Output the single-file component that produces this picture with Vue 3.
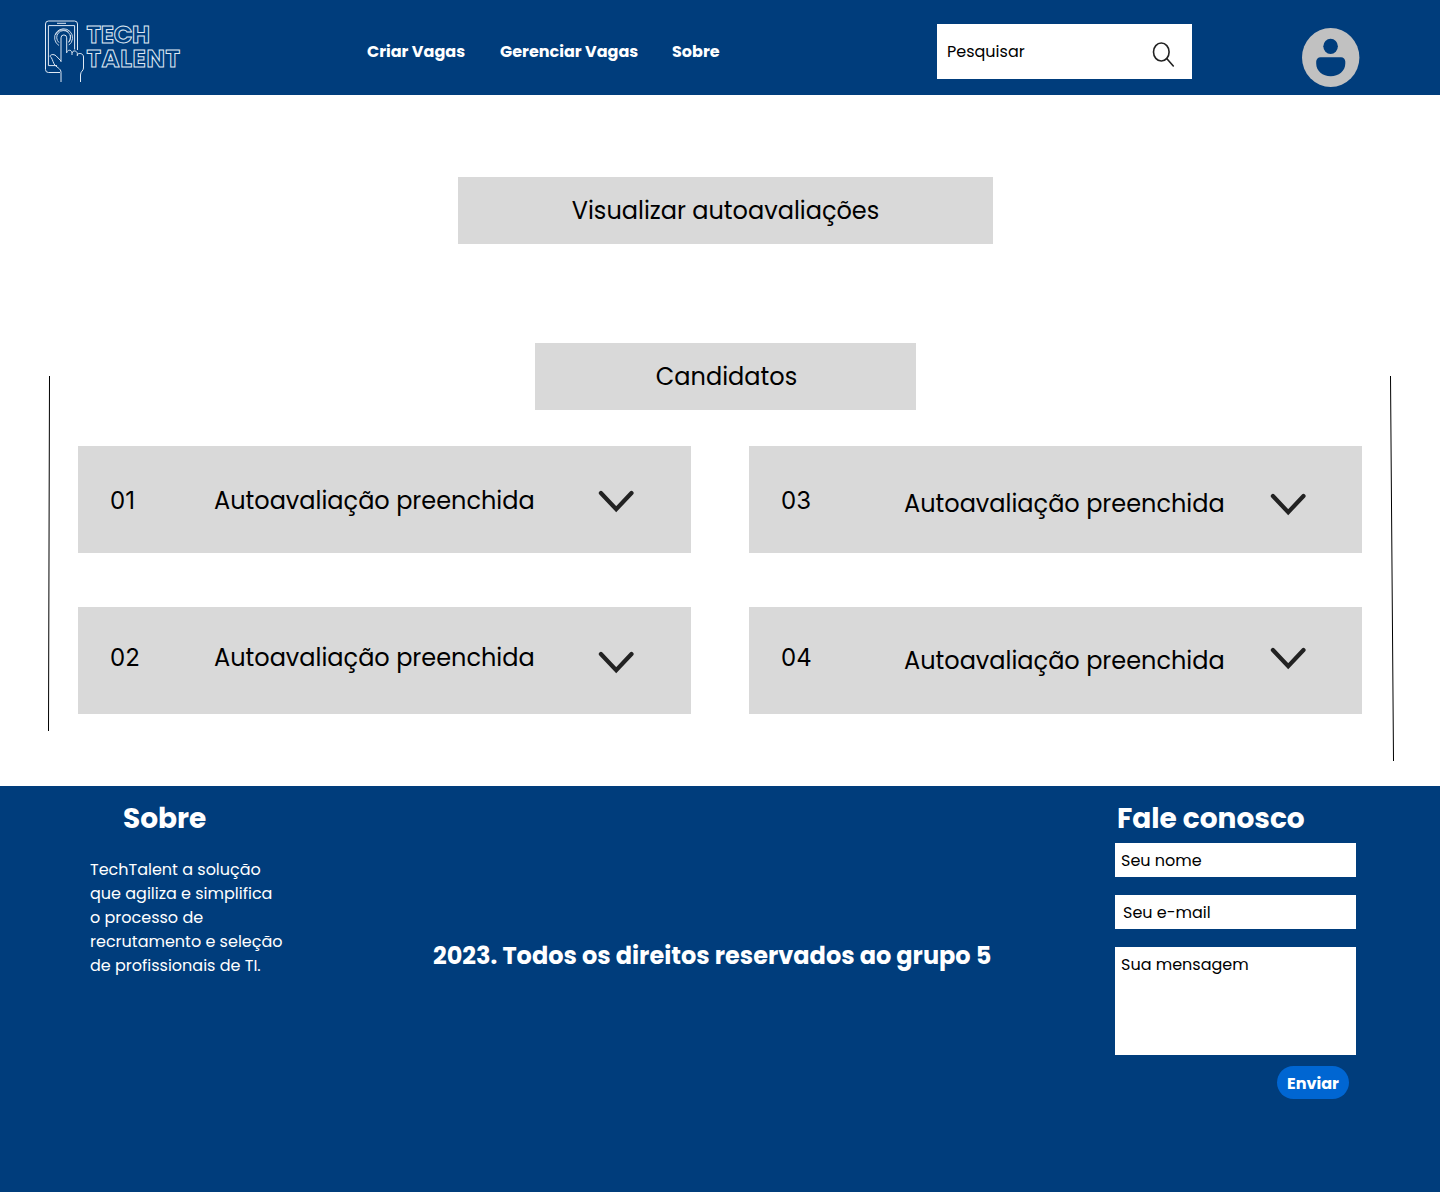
<script setup>
const links = ['Criar Vagas', 'Gerenciar Vagas', 'Sobre']
const candidates = [
  { id: '01', cls: 'c1' },
  { id: '03', cls: 'c3' },
  { id: '02', cls: 'c2' },
  { id: '04', cls: 'c4' },
]
const about = [
  'TechTalent a solução',
  'que agiliza e simplifica',
  'o processo de',
  'recrutamento e seleção',
  'de profissionais de TI.',
]
</script>

<template>
  <div class="page">
    <header class="topbar">
      <svg class="logo" width="138" height="64" viewBox="44 19 138 64" fill="none" stroke="#dfe9f4" stroke-width="1">
        <path d="M60 72.500H48.500a3 3 0 0 1-3-3V24a3 3 0 0 1 3-3h26a3 3 0 0 1 3 3v26" />
        <path d="M57 65.600h-8.600V25.600h26.200V49.500M57 23.300h9" />
        <path d="M59 45.500a9 9 0 1 1 9.800-.4M59 42.600a6.900 6.900 0 1 1 9.800-.6M55.500 35c2-5 8-7 13-3M70.500 35c0 5-1 6-2 7.500" stroke-width=".9" />
        <path d="M61 62V37.800a2.800 2.800 0 0 1 5.700 0V53M66.700 52.500c.8-3 4.600-3 5.300 0V55M72 53c.8-3 4.600-2.600 5.300.3V56M77.300 54.500c2-2 6.200-1 6.200 2.500V68c0 3-3 3-3 7v7M61 61l-5-5.200c-2.500-2.200-6-1-6 .4 2.200 1.600 2.600 5 4 7.600 2 3.600 7 4.500 7 8.500V82" />
        <text x="86.500" y="43.200" textLength="63.500">TECH</text>
        <text x="86.500" y="66.600" textLength="93.500">TALENT</text>
      </svg>
      <nav class="nav"><a v-for="l in links" :key="l">{{ l }}</a></nav>
      <div class="search">
        <span>Pesquisar</span>
        <svg width="24" height="27" viewBox="0 0 24 27" fill="none" stroke="#222" stroke-width="1.600" stroke-linecap="round">
          <ellipse cx="9.300" cy="11" rx="7.800" ry="9" /><path d="M14.700 17.500L21.300 25" />
        </svg>
      </div>
      <svg class="avatar" width="58" height="60" viewBox="0 0 58 60">
        <ellipse cx="28.700" cy="29.500" rx="28.700" ry="29.500" fill="#c1c1c1" />
        <ellipse cx="28.600" cy="18.300" rx="7.300" ry="7.600" fill="#003d7c" />
        <path d="M18.500 29.200h20.500a4.300 4.300 0 0 1 4.300 4.300v2C43.300 43 36.700 48.200 28.700 48.200S14.200 43 14.200 35.500v-2a4.300 4.300 0 0 1 4.300-4.300z" fill="#003d7c" />
      </svg>
    </header>

    <main>
      <h1 class="banner">Visualizar autoavaliações</h1>
      <section class="candidates">
        <svg class="rail" width="3" height="355"><path d="M1.500 0L.5 355" stroke="#000" /></svg>
        <div class="content">
          <h2 class="banner small">Candidatos</h2>
          <div class="cards">
            <article v-for="c in candidates" :key="c.id" class="card" :class="c.cls">
              <span class="num">{{ c.id }}</span>
              <span class="label">Autoavaliação preenchida</span>
              <svg class="chev" width="36" height="23" viewBox="0 0 36 23" fill="none" stroke="#222" stroke-width="4.200" stroke-linecap="round">
                <path d="M2.900 3L18.200 19.200L33.500 3" />
              </svg>
            </article>
          </div>
        </div>
        <svg class="rail" width="5" height="385"><path d="M.5 0L3.500 385" stroke="#000" /></svg>
      </section>
    </main>

    <footer class="footer">
      <section class="about">
        <h3>Sobre</h3>
        <p><span v-for="l in about" :key="l" class="line">{{ l }}</span></p>
      </section>
      <p class="copy">2023. Todos os direitos reservados ao grupo 5</p>
      <form class="contact">
        <h3>Fale conosco</h3>
        <div class="field">Seu nome</div>
        <div class="field email">Seu e-mail</div>
        <div class="field message">Sua mensagem</div>
        <button type="button">Enviar</button>
      </form>
    </footer>
  </div>
</template>

<style>
body { margin: 0; background: #fff; }
</style>

<style scoped>
.page { width: 1440px; height: 1192px; overflow: hidden; font: 16px/24px Poppins, Inter, "Open Sans", sans-serif; color: #000; white-space: nowrap; }
h1, h2, h3, p { margin: 0; }
.topbar { height: 95px; background: #003d7c; display: flex; align-items: flex-start; }
.logo { margin: 19px 0 0 44px; flex: none; overflow: visible; }
.logo text { font: 700 24.500px Poppins, Inter, sans-serif; stroke-width: 1; }
.nav { display: flex; width: 569px; margin: 40px 0 0 185px; color: #fff; font-weight: 700; }
.nav a:nth-child(1) { width: 133px; }
.nav a:nth-child(2) { width: 172px; }
.search { box-sizing: border-box; width: 255px; height: 55px; margin: 24px 0 0 1px; padding: 16px 16px 0 10px; background: #fff; display: flex; justify-content: space-between; }
.search svg { margin-top: 1px; }
.avatar { margin: 28px 0 0 110px; }
main { height: 691px; box-sizing: border-box; padding-top: 82px; }
.banner { box-sizing: border-box; width: 535px; height: 67px; margin-left: 458px; background: #d9d9d9; font-size: 24px; font-weight: 400; line-height: 68px; text-align: center; }
.candidates { display: flex; margin-top: 99px; padding-left: 48px; }
.rail { margin-top: 33px; flex: none; }
.content { width: 1284px; margin: 0 28px 0 27px; }
.small { width: 381px; margin-left: 457px; padding-left: 2px; }
.cards { display: grid; grid-template-columns: 613px 613px; gap: 54px 58px; margin-top: 36px; }
.card { height: 107px; background: #d9d9d9; display: flex; align-items: flex-start; font-size: 24px; line-height: 36px; }
.num { margin-left: 32px; width: 104px; padding-top: 37px; font-family: Inter, sans-serif; }
.label { width: 384px; padding-top: 37px; }
.chev { margin-top: 44px; }
.c2 .num, .c2 .label, .c4 .num { padding-top: 33px; }
.c3 .label { padding-top: 40px; }
.c4 .label { padding-top: 36px; }
.c3 .num, .c4 .num { width: 123px; }
.c3 .label, .c4 .label { width: 366px; }
.c3 .chev { margin-top: 47px; }
.c4 .chev { margin-top: 40px; }
.footer { height: 406px; background: #003d7c; color: #fff; display: flex; }
h3 { font-size: 28px; line-height: 44px; font-weight: 700; }
.about { width: 343px; padding: 11px 0 0 90px; }
.about h3 { padding-left: 33px; }
.about p { margin-top: 17px; }
.line { display: block; }
.copy { width: 682px; padding-top: 152px; font-size: 24px; line-height: 36px; font-weight: 700; }
.contact { padding-top: 11px; width: 241px; }
.contact h3 { padding-left: 2px; }
.field { height: 34px; box-sizing: border-box; margin: 2px 0 0; padding: 6px 6px 4px; background: #fff; color: #000; }
.email { margin-top: 18px; padding-left: 8px; }
.message { margin-top: 18px; height: 108px; }
button { display: block; width: 72px; height: 33px; margin: 11px 0 0 162px; padding: 2px 0 0; border: 0; border-radius: 17px; background: #0066d2; color: #fff; font: inherit; font-weight: 700; }
</style>
